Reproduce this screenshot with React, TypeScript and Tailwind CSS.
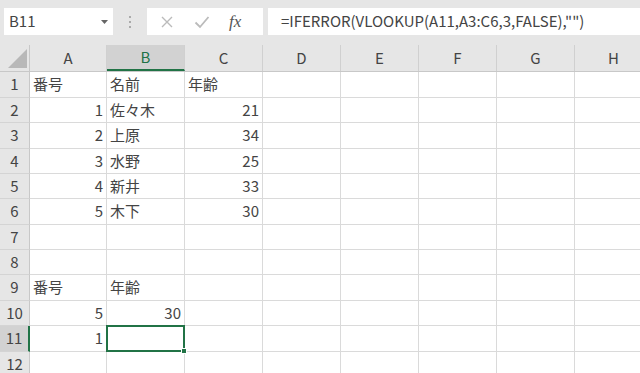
import React from "react";

const cols = ["A", "B", "C", "D", "E", "F", "G", "H"];
const colW = [77, 78, 78, 78, 78, 78, 78, 78];
const rowH = [26, 25, 26, 25, 25, 26, 25, 25, 26, 25, 26, 25];

type Cell = { t: string; right?: boolean };
const data: Record<number, Record<number, Cell>> = {
  1: { 0: { t: "番号" }, 1: { t: "名前" }, 2: { t: "年齢" } },
  2: { 0: { t: "1", right: true }, 1: { t: "佐々木" }, 2: { t: "21", right: true } },
  3: { 0: { t: "2", right: true }, 1: { t: "上原" }, 2: { t: "34", right: true } },
  4: { 0: { t: "3", right: true }, 1: { t: "水野" }, 2: { t: "25", right: true } },
  5: { 0: { t: "4", right: true }, 1: { t: "新井" }, 2: { t: "33", right: true } },
  6: { 0: { t: "5", right: true }, 1: { t: "木下" }, 2: { t: "30", right: true } },
  9: { 0: { t: "番号" }, 1: { t: "年齢" } },
  10: { 0: { t: "5", right: true }, 1: { t: "30", right: true } },
  11: { 0: { t: "1", right: true } },
};

const font = { fontFamily: '"Noto Sans CJK JP", "Noto Sans", sans-serif' };

export default function App() {
  return (
    <div className="w-[640px] h-[373px] overflow-hidden bg-white text-[#444]" style={font}>
      {/* formula bar */}
      <div className="h-[45px] bg-[#e6e6e6] flex items-start pt-[8px] pl-[4px]">
        <div className="w-[109px] h-[27px] bg-white flex items-center justify-between pl-[5px] pr-[4px]">
          <span className="text-[15px] text-[#444]">B11</span>
          <svg width="9" height="6" viewBox="0 0 9 6"><path d="M1 1h7L4.5 5z" fill="#666" /></svg>
        </div>
        <div className="w-[34px] h-[27px] flex items-center justify-center">
          <div className="flex flex-col gap-[3px]">
            <span className="w-[2px] h-[2px] bg-[#aaa]" />
            <span className="w-[2px] h-[2px] bg-[#aaa]" />
            <span className="w-[2px] h-[2px] bg-[#aaa]" />
          </div>
        </div>
        <div className="w-[116px] h-[27px] bg-white flex items-center">
          <svg className="ml-[13px]" width="14" height="14" viewBox="0 0 14 14">
            <path d="M2 2L12 12M12 2L2 12" stroke="#bbb" strokeWidth="1.4" />
          </svg>
          <svg className="ml-[20px]" width="16" height="14" viewBox="0 0 16 14">
            <path d="M1.5 7.5L6 12L14.5 2" stroke="#bbb" strokeWidth="1.8" fill="none" />
          </svg>
          <span className="ml-[19px] text-[17px] italic text-[#555]" style={{ fontFamily: '"Liberation Serif", serif' }}>
            fx
          </span>
        </div>
        <div className="ml-[5px] flex-1 h-[27px] bg-white flex items-center pl-[13px] text-[15px] text-[#444] whitespace-nowrap">
          =IFERROR(VLOOKUP(A11,A3:C6,3,FALSE),"")
        </div>
      </div>

      {/* column header */}
      <div className="flex h-[27px] bg-[#e6e6e6] border-b border-[#c8c8c8]">
        <div className="w-[30px] shrink-0 relative border-r border-[#c8c8c8]">
          <svg className="absolute left-[8px] bottom-[3px]" width="19" height="19" viewBox="0 0 19 19">
            <path d="M19 0V19H0Z" fill="#b8b8b8" />
          </svg>
        </div>
        {cols.map((c, i) => (
          <div
            key={c}
            style={{ width: colW[i] }}
            className={`shrink-0 flex items-center justify-center text-[15px] border-r border-[#d0d0d0] ${
              i === 1 ? "bg-[#d2d2d2] text-[#217346] border-b-2 border-b-[#217346]" : "text-[#444]"
            }`}
          >
            {c}
          </div>
        ))}
      </div>

      {/* rows */}
      {rowH.map((h, ri) => {
        const r = ri + 1;
        const row = data[r] || {};
        const sel = r === 11;
        return (
          <div key={r} className={`flex ${sel ? "relative z-10" : ""}`} style={{ height: h }}>
            <div
              className={`w-[30px] shrink-0 flex items-center justify-center text-[15px] border-b border-[#d4d4d4] ${
                sel ? "bg-[#d2d2d2] border-r-2 border-r-[#217346]" : "bg-[#e6e6e6] border-r border-r-[#c8c8c8]"
              } text-[#444]`}
            >
              {r}
            </div>
            {cols.map((c, ci) => {
              const cell = row[ci];
              const active = sel && ci === 1;
              return (
                <div
                  key={c}
                  style={{ width: colW[ci] }}
                  className={`shrink-0 relative flex items-center px-[3px] text-[15px] text-[#444] border-r border-b border-[#dadada] ${
                    cell?.right ? "justify-end" : "justify-start"
                  }`}
                >
                  {cell?.t}
                  {active && (
                    <div className="absolute -left-px -top-px w-[79px] h-[27px] border-2 border-[#217346] z-10">
                      <div className="absolute -right-[4px] -bottom-[4px] w-[6px] h-[6px] bg-[#217346] border border-white" />
                    </div>
                  )}
                </div>
              );
            })}
          </div>
        );
      })}
    </div>
  );
}
